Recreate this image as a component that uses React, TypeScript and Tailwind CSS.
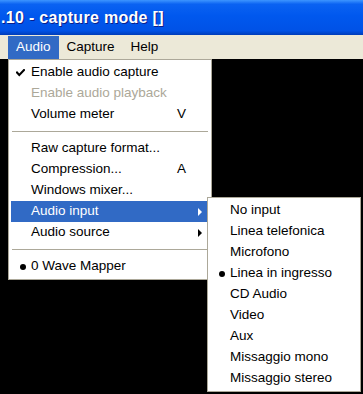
import * as React from 'react';

const FONT = { fontFamily: '"Liberation Sans", Arial, sans-serif' };

type Item =
    | { kind: 'sep' }
    | { kind: 'item'; label: string; check?: boolean; radio?: boolean; disabled?: boolean; shortcut?: string; sub?: boolean; active?: boolean };

const audioMenu: Item[] = [
    { kind: 'item', label: 'Enable audio capture', check: true },
    { kind: 'item', label: 'Enable audio playback', disabled: true },
    { kind: 'item', label: 'Volume meter', shortcut: 'V' },
    { kind: 'sep' },
    { kind: 'item', label: 'Raw capture format...' },
    { kind: 'item', label: 'Compression...', shortcut: 'A' },
    { kind: 'item', label: 'Windows mixer...' },
    { kind: 'item', label: 'Audio input', sub: true, active: true },
    { kind: 'item', label: 'Audio source', sub: true },
    { kind: 'sep' },
    { kind: 'item', label: '0 Wave Mapper', radio: true },
];

const inputMenu: Item[] = [
    { kind: 'item', label: 'No input' },
    { kind: 'item', label: 'Linea telefonica' },
    { kind: 'item', label: 'Microfono' },
    { kind: 'item', label: 'Linea in ingresso', radio: true },
    { kind: 'item', label: 'CD Audio' },
    { kind: 'item', label: 'Video' },
    { kind: 'item', label: 'Aux' },
    { kind: 'item', label: 'Missaggio mono' },
    { kind: 'item', label: 'Missaggio stereo' },
];

const Check: React.FC = () => (
    <svg width="9" height="8" viewBox="0 0 9 8" className="absolute left-[5px] top-[7px]">
        <path d="M1 3.5 L3.3 6 L8 1" stroke="currentColor" strokeWidth="2" fill="none" strokeLinecap="square" />
    </svg>
);

const MenuRow: React.FC<{ item: Item }> = ({ item }) => {
    if (item.kind === 'sep') {
        return (
            <div className="h-[13px] flex items-center px-[1px]">
                <div className="w-full h-[2px] border-t border-[#aca899] border-b border-b-white" />
            </div>
        );
    }
    const color = item.active ? 'bg-[#316ac5] text-white' : item.disabled ? 'text-[#aca899]' : 'text-black';
    return (
        <div className={`relative h-[21px] flex items-center pl-[20px] pr-[4px] text-[13.5px] ${color}`}>
            {item.check && <Check />}
            {item.radio && <span className="absolute left-[9px] top-[8px] w-[6px] h-[6px] rounded-full bg-current" />}
            <span className="flex-1 whitespace-nowrap">{item.label}</span>
            {item.shortcut && <span className="w-[28px]">{item.shortcut}</span>}
            {item.sub && (
                <span className="w-[25px] flex justify-end pr-[3px]">
                    <span className="w-0 h-0 border-y-[4px] border-y-transparent border-l-[4px] border-l-current" />
                </span>
            )}
        </div>
    );
};

const Menu: React.FC<{ items: Item[]; className: string }> = ({ items, className }) => (
    <div className={`absolute bg-white border border-[#aca899] p-[2px] ${className}`}>
        {items.map((it, i) => (
            <MenuRow key={i} item={it} />
        ))}
    </div>
);

export default function App() {
    return (
        <div className="relative w-[363px] h-[394px] overflow-hidden bg-black flex flex-col" style={FONT}>
            <div className="h-[35px] flex items-center pl-[1px] bg-[linear-gradient(to_bottom,#3d95ff_0%,#0a62f2_12%,#0058ee_45%,#0052e6_88%,#003cb8_100%)]">
                <span className="text-white font-bold text-[16px] tracking-[0.3px] [text-shadow:1px_1px_0_#0a1e8a]">.10 - capture mode []</span>
            </div>
            <div className="h-[24px] bg-[#ece9d8] flex items-stretch pl-[8px] pt-[1px] text-[13.5px]">
                <div className="px-[8px] flex items-center bg-[#316ac5] text-white">Audio</div>
                <div className="px-[8px] flex items-center">Capture</div>
                <div className="px-[8px] flex items-center">Help</div>
            </div>
            <div className="flex-1 bg-black" />
            <Menu items={audioMenu} className="left-[8px] top-[59px] w-[204px]" />
            <Menu items={inputMenu} className="left-[207px] top-[197px] w-[154px]" />
        </div>
    );
}
